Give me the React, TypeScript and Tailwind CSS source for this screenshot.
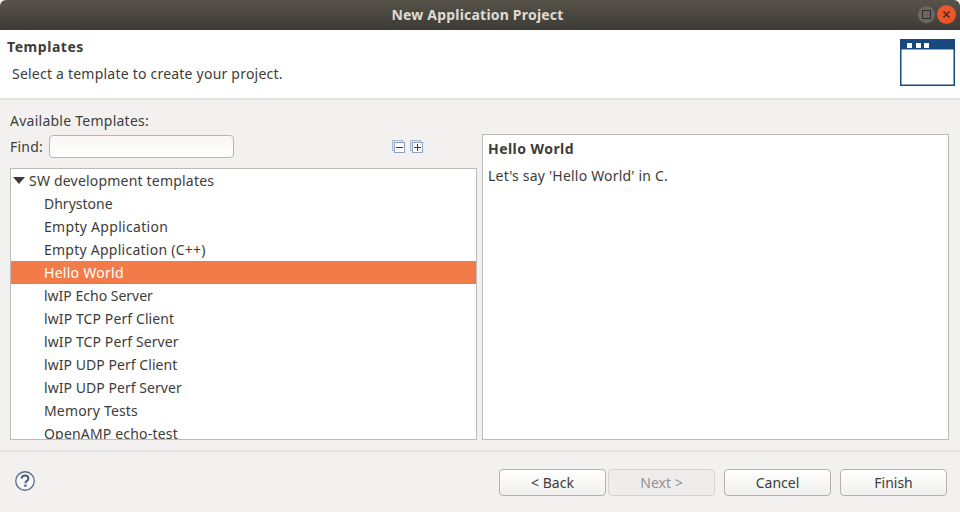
const templates = [
  { name: 'Dhrystone', cls: '' },
  { name: 'Empty Application', cls: 'tracking-[0.3px]' },
  { name: 'Empty Application (C++)', cls: 'tracking-[0.25px]' },
  { name: 'Hello World', cls: 'tracking-[0.27px]' },
  { name: 'lwIP Echo Server', cls: '' },
  { name: 'lwIP TCP Perf Client', cls: 'tracking-[0.1px]' },
  { name: 'lwIP TCP Perf Server', cls: 'tracking-[0.1px]' },
  { name: 'lwIP UDP Perf Client', cls: 'tracking-[0.05px]' },
  { name: 'lwIP UDP Perf Server', cls: 'tracking-[0.05px]' },
  { name: 'Memory Tests', cls: 'tracking-[0.17px]' },
  { name: 'OpenAMP echo-test', cls: 'tracking-[0.18px]' },
];

function TreeIcon({ plus }: { plus?: boolean }) {
  return (
    <svg width="13" height="13" viewBox="0 0 13 13">
      <rect x="0.5" y="0.5" width="10" height="10" fill="#dfe8f3" stroke="#a9b8d0" />
      <rect x="2.5" y="2.5" width="10" height="10" fill="#fff" stroke="#8f9fbd" />
      <path d={plus ? 'M4 7.5h7M7.5 4v7' : 'M4 7.5h7'} stroke="#17406e" strokeWidth="1" />
    </svg>
  );
}

function Btn({ label, disabled }: { label: string; disabled?: boolean }) {
  return (
    <button
      className={
        disabled
          ? 'w-[107px] h-[27px] rounded-[4px] border border-[#d5d3d0] bg-[#eeedec] text-[#93918e] text-[14px]'
          : 'w-[107px] h-[27px] rounded-[4px] border border-[#b5b2ae] bg-gradient-to-b from-[#ffffff] to-[#f1f0ef] text-[#3d3c39] text-[14px]'
      }
    >
      {label}
    </button>
  );
}

export default function App() {
  return (
    <div className="w-[960px] h-[512px] flex flex-col overflow-hidden bg-[#f2f1f0] text-[14px] text-[#3d3c39] font-['Noto_Sans',sans-serif]">
      {/* titlebar */}
      <div className="relative h-[30px] shrink-0 flex items-center justify-center rounded-t-[6px] bg-gradient-to-b from-[#57534a] to-[#3d3b36] pr-[5px] pb-[2px]">
        <span className="text-[14px] font-bold tracking-[0.2px] text-[#dfdbd2]">New Application Project</span>
        <div className="absolute right-[4px] top-[5px] flex items-center gap-[1px]">
          <div className="w-[19px] h-[19px] rounded-full bg-[#6a675f] border border-[#4c4a43] flex items-center justify-center">
            <div className="w-[9px] h-[9px] border border-[#2e2d29]" />
          </div>
          <div className="w-[19px] h-[19px] rounded-full bg-[#e9562a] flex items-center justify-center">
            <svg width="9" height="9" viewBox="0 0 9 9">
              <path d="M1.5 1.5l6 6M7.5 1.5l-6 6" stroke="#4a2a1c" strokeWidth="1.5" />
            </svg>
          </div>
        </div>
      </div>

      {/* header */}
      <div className="h-[70px] shrink-0 bg-white border-b-2 border-[#e4e2df] flex justify-between pl-[7px] pr-[5px]">
        <div className="pt-[7px]">
          <div className="font-bold leading-[19px] tracking-[0.55px]">Templates</div>
          <div className="pl-[5px] pt-[8px] leading-[19px] tracking-[0.22px]">Select a template to create your project.</div>
        </div>
        <svg width="55" height="47" viewBox="0 0 55 47" className="mt-[9px]">
          <rect x="0" y="0" width="55" height="47" fill="#17497e" />
          <rect x="1.5" y="10.5" width="52" height="35" fill="#fff" />
          <rect x="7" y="4" width="5" height="5" fill="#fff" />
          <rect x="16" y="4" width="5" height="5" fill="#fff" />
          <rect x="24" y="4" width="5" height="5" fill="#fff" />
        </svg>
      </div>

      {/* body */}
      <div className="flex-1 min-h-0 flex pl-[10px] pr-[11px] gap-[5px]">
        <div className="w-[467px] flex flex-col">
          <div className="pt-[11px] h-[35px] leading-[19px] tracking-[0.25px]">Available Templates:</div>
          <div className="h-[33px] flex items-start">
            <span className="leading-[23px] tracking-[0.2px]">Find:</span>
            <input className="ml-[6px] w-[185px] h-[23px] rounded-[4px] border border-[#b9b6b2] bg-gradient-to-b from-[#f7f6f5] to-white" />
            <div className="ml-[158px] mt-[5px] flex gap-[5px]">
              <TreeIcon />
              <TreeIcon plus />
            </div>
          </div>
          <div className="h-[272px] border border-[#bdbbb8] bg-white overflow-hidden">
            <div className="h-[23px] flex items-center pl-[2px]">
              <svg width="12" height="8" viewBox="0 0 12 8">
                <path d="M0 0h12L6 7z" fill="#3d3c39" />
              </svg>
              <span className="ml-[4px] tracking-[0.2px]">SW development templates</span>
            </div>
            {templates.map((t) => (
              <div
                key={t.name}
                className={
                  t.name === 'Hello World'
                    ? `h-[23px] flex items-center pl-[33px] bg-[#f37b49] text-white ${t.cls}`
                    : `h-[23px] flex items-center pl-[33px] ${t.cls}`
                }
              >
                {t.name}
              </div>
            ))}
          </div>
        </div>
        <div className="w-[467px] mt-[34px] h-[306px] border border-[#bdbbb8] bg-white px-[5px] pt-[4px]">
          <div className="font-bold leading-[19px] tracking-[0.45px]">Hello World</div>
          <div className="pt-[8px] leading-[19px] tracking-[0.2px]">Let's say 'Hello World' in C.</div>
        </div>
      </div>

      {/* footer */}
      <div className="h-[62px] shrink-0 border-t-2 border-[#e4e2df] flex items-start justify-between pl-[15px] pr-[13px] pt-[17px]">
        <svg width="20" height="20" viewBox="0 0 20 20" className="mt-[2px]">
          <circle cx="10" cy="10" r="9.25" fill="#f7f7f8" stroke="#5b6a8c" strokeWidth="1.3" />
          <path
            d="M6.6 7.6C6.8 5.6 8.2 4.6 10 4.6c2 0 3.4 1.1 3.4 2.9 0 1.4-.9 2-1.8 2.7-.8.6-1.1 1-1.1 2"
            fill="none"
            stroke="#4a5a7d"
            strokeWidth="2"
          />
          <rect x="9.3" y="13.6" width="2.2" height="2.2" fill="#4a5a7d" />
        </svg>
        <div className="flex">
          <Btn label="< Back" />
          <div className="ml-[2px]">
            <Btn label="Next >" disabled />
          </div>
          <div className="ml-[9px]">
            <Btn label="Cancel" />
          </div>
          <div className="ml-[9px]">
            <Btn label="Finish" />
          </div>
        </div>
      </div>
    </div>
  );
}
